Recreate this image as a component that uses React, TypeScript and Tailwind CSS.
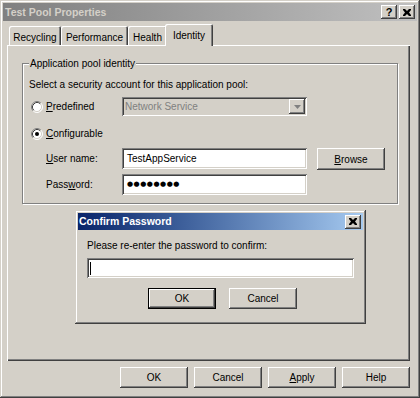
import React from 'react'

const raised =
  'shadow-[inset_-1px_-1px_#404040,inset_1px_1px_#ffffff,inset_-2px_-2px_#808080,inset_2px_2px_#d4d0c8]'
const sunken =
  'shadow-[inset_1px_1px_#808080,inset_-1px_-1px_#ffffff,inset_2px_2px_#404040,inset_-2px_-2px_#d4d0c8]'
const windowFrame =
  'shadow-[inset_-1px_-1px_#404040,inset_1px_1px_#d4d0c8,inset_-2px_-2px_#808080,inset_2px_2px_#ffffff]'

function Btn({
  children,
  isDefault = false,
  className = '',
}: {
  children: React.ReactNode
  isDefault?: boolean
  className?: string
}) {
  if (isDefault) {
    return (
      <div className={`border border-black ${className}`}>
        <div className={`flex h-full w-full items-center justify-center ${raised}`}>{children}</div>
      </div>
    )
  }
  return <div className={`flex items-center justify-center ${raised} ${className}`}>{children}</div>
}

function CloseGlyph() {
  return (
    <svg width="8" height="7" viewBox="0 0 8 7">
      <path d="M0 0h2l2 2 2-2h2v1L6 3.5 8 6v1H6L4 5 2 7H0V6l2-2.5L0 1z" fill="#000" />
    </svg>
  )
}

function CaptionButton({ children }: { children: React.ReactNode }) {
  return <div className={`flex h-[14px] w-[16px] items-center justify-center bg-[#d4d0c8] ${raised}`}>{children}</div>
}

function Radio({ checked }: { checked?: boolean }) {
  return (
    <svg width="12" height="12" viewBox="0 0 12 12">
      <circle cx="6" cy="6" r="5" fill="#fff" />
      <path d="M2.11 9.89A5.5 5.5 0 0 1 9.89 2.11" fill="none" stroke="#808080" />
      <path d="M9.89 2.11A5.5 5.5 0 0 1 2.11 9.89" fill="none" stroke="#fff" />
      <path d="M2.82 9.18A4.5 4.5 0 0 1 9.18 2.82" fill="none" stroke="#404040" />
      <path d="M9.18 2.82A4.5 4.5 0 0 1 2.82 9.18" fill="none" stroke="#d4d0c8" />
      {checked && <circle cx="6" cy="6" r="2" fill="#000" />}
    </svg>
  )
}

const tabs = [
  { label: 'Recycling', w: 'w-[52px]' },
  { label: 'Performance', w: 'w-[67px]' },
  { label: 'Health', w: 'w-[39px]' },
]

export default function App() {
  return (
    <div
      className={`relative flex h-[398px] w-[420px] flex-col overflow-hidden bg-[#d4d0c8] p-[3px] font-['Liberation_Sans',Arial,sans-serif] text-[10px] leading-[13px] text-black ${windowFrame}`}
    >
      {/* caption */}
      <div className="flex h-[18px] items-center bg-linear-to-r from-[#808080] to-[#c0c0c0] pl-[2px] pr-[2px]">
        <span className="text-[10.5px] font-bold text-[#d4d0c8]">Test Pool Properties</span>
        <div className="ml-auto flex gap-[2px]">
          <CaptionButton>
            <span className="text-[11px] font-bold leading-none">?</span>
          </CaptionButton>
          <CaptionButton>
            <CloseGlyph />
          </CaptionButton>
        </div>
      </div>

      <div className="flex flex-1 flex-col pl-[4px] pr-[7px]">
        {/* tab strip */}
        <div className="mt-[3px] flex h-[21px] items-end pl-[2px]">
          {tabs.map((t) => (
            <div
              key={t.label}
              className={`flex h-[19px] items-center justify-center rounded-t-[2px] pt-[3px] shadow-[inset_1px_1px_#ffffff,inset_-1px_0_#404040,inset_-2px_0_#808080] ${t.w}`}
            >
              {t.label}
            </div>
          ))}
          <div className="relative z-10 -mx-[2px] -mb-[1px] flex h-[22px] w-[48px] items-start justify-center rounded-t-[2px] bg-[#d4d0c8] pt-[5px] shadow-[inset_1px_1px_#ffffff,inset_-1px_0_#404040,inset_-2px_0_#808080]">
            Identity
          </div>
        </div>

        {/* tab page */}
        <div className="flex h-[316px] flex-col shadow-[inset_1px_1px_#ffffff,inset_-1px_-1px_#404040,inset_-2px_-2px_#808080]">
          <div className="relative ml-[15px] mr-[12px] mt-[18px] h-[141px] border border-[#808080] shadow-[inset_1px_1px_#ffffff,1px_1px_#ffffff]">
            <span className="absolute -top-[7px] left-[6px] bg-[#d4d0c8] px-[1px]">Application pool identity</span>

            <div className="flex flex-col pl-[6px] pt-[14px]">
              <div>Select a security account for this application pool:</div>

              <div className="mt-[6px] flex h-[19px] items-center">
                <div className="ml-[2px] w-[14px]">
                  <Radio />
                </div>
                <div className="ml-[1px] w-[76px]">
                  <u>P</u>redefined
                </div>
                <div className={`flex h-[19px] w-[185px] items-center bg-[#d4d0c8] pl-[3px] pr-[2px] ${sunken}`}>
                  <span className="text-[#808080]">Network Service</span>
                  <div className={`ml-auto flex h-[15px] w-[16px] items-center justify-center ${raised}`}>
                    <svg width="7" height="4" viewBox="0 0 7 4">
                      <path d="M0 0h7L3.5 4z" fill="#808080" />
                    </svg>
                  </div>
                </div>
              </div>

              <div className="mt-[8px] flex h-[19px] items-center">
                <div className="ml-[2px] w-[14px]">
                  <Radio checked />
                </div>
                <div className="ml-[1px]">
                  <u>C</u>onfigurable
                </div>
              </div>

              <div className="mt-[5px] flex h-[21px] items-start">
                <div className="ml-[17px] flex h-[21px] w-[76px] items-center">
                  <u>U</u>ser name:
                </div>
                <div className={`flex h-[21px] w-[185px] items-center bg-white pl-[5px] ${sunken}`}>TestAppService</div>
                <Btn className="ml-[10px] h-[22px] w-[68px]">
                  <u>B</u>rowse
                </Btn>
              </div>

              <div className="mt-[5px] flex h-[21px] items-center">
                <div className="ml-[17px] w-[76px]">
                  Pass<u>w</u>ord:
                </div>
                <div className={`flex h-[21px] w-[185px] items-center bg-white pl-[5px] ${sunken}`}>
                  <span className="font-['DejaVu_Sans',sans-serif] text-[7px] tracking-[0.5px]">●●●●●●●●</span>
                </div>
              </div>
            </div>
          </div>
        </div>

        {/* dialog buttons */}
        <div className="mt-[6px] flex justify-end gap-[6px]">
          <Btn className="h-[21px] w-[68px]">OK</Btn>
          <Btn className="h-[21px] w-[68px]">Cancel</Btn>
          <Btn className="h-[21px] w-[68px]">
            <u>A</u>pply
          </Btn>
          <Btn className="h-[21px] w-[68px]">Help</Btn>
        </div>
      </div>

      {/* confirm password dialog */}
      <div className={`absolute left-[75px] top-[210px] flex h-[114px] w-[291px] flex-col bg-[#d4d0c8] p-[3px] ${windowFrame}`}>
        <div className="flex h-[17px] items-center bg-linear-to-r from-[#0a246a] to-[#a6caf0] pl-[1px] pr-[2px]">
          <span className="text-[10.5px] font-bold text-white">Confirm Password</span>
          <div className="ml-auto">
            <CaptionButton>
              <CloseGlyph />
            </CaptionButton>
          </div>
        </div>
        <div className="flex flex-col pl-[9px]">
          <div className="mt-[9px]">Please re-enter the password to confirm:</div>
          <div className={`mt-[6px] flex h-[20px] w-[267px] items-center bg-white pl-[3px] ${sunken}`}>
            <div className="h-[13px] w-[1px] bg-black" />
          </div>
          <div className="mt-[10px] flex gap-[13px] pl-[61px]">
            <Btn isDefault className="h-[21px] w-[68px]">
              OK
            </Btn>
            <Btn className="h-[21px] w-[68px]">Cancel</Btn>
          </div>
        </div>
      </div>
    </div>
  )
}
